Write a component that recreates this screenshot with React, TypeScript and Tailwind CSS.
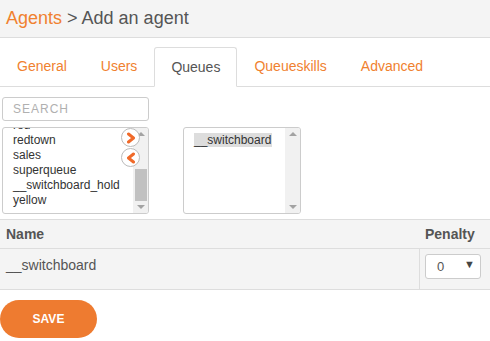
import { useState } from 'react';

const leftQueues = ['red', 'redtown', 'sales', 'superqueue', '__switchboard_hold', 'yellow'];

function ScrollBar({ thumb }: { thumb?: boolean }) {
  return (
    <div className="flex w-[15px] flex-col items-center bg-[#f1f1f1]">
      <div className="mt-[4px] h-0 w-0 border-x-[4px] border-b-[4px] border-x-transparent border-b-[#a3a3a3]" />
      <div className="flex flex-1 flex-col justify-end py-[4px]">
        {thumb && <div className="h-[32px] w-[12px] bg-[#c1c1c1]" />}
      </div>
      <div className="mb-[4px] h-0 w-0 border-x-[4px] border-t-[4px] border-x-transparent border-t-[#a3a3a3]" />
    </div>
  );
}

function CircleArrow({ dir }: { dir: 'right' | 'left' }) {
  return (
    <div className="flex h-[19px] w-[19px] items-center justify-center rounded-full border border-[#bbb] bg-white">
      <svg width="12" height="12" viewBox="0 0 12 12">
        {dir === 'right' ? (
          <path d="M3.5 2 L8.5 6 L3.5 10" fill="none" stroke="#f06a2a" strokeWidth="3" strokeLinecap="round" strokeLinejoin="round" />
        ) : (
          <path d="M8.5 2 L3.5 6 L8.5 10" fill="none" stroke="#f06a2a" strokeWidth="3" strokeLinecap="round" strokeLinejoin="round" />
        )}
      </svg>
    </div>
  );
}

export default function App() {
  const [tab] = useState('Queues');
  const tabs = ['General', 'Users', 'Queues', 'Queueskills', 'Advanced'];

  return (
    <div className="h-[341px] w-[490px] overflow-hidden bg-white font-['Liberation_Sans',Arial,sans-serif] text-[#555]">
      <div className="flex h-[38px] items-center border-b border-[#ddd] bg-[#f4f4f4] px-[6px] text-[18px]">
        <span className="text-[#f0812f]">Agents</span>
        <span className="ml-[5px] text-[#555]">&gt; Add an agent</span>
      </div>

      <div className="mt-[9px] flex h-[40px] border-b border-[#ddd] pl-0 text-[14px]">
        {tabs.map((t) => (
          <div
            key={t}
            className={
              t === tab
                ? 'relative -mb-px flex items-center rounded-t-[3px] border border-b-white border-[#ddd] bg-white px-[16px] text-[#555]'
                : 'flex items-center px-[17px] text-[#f0812f]'
            }
          >
            {t}
          </div>
        ))}
      </div>

      <div className="mt-[10px] px-[2px]">
        <div className="flex h-[24px] w-[147px] items-center rounded-[3px] border border-[#ccc] px-[10px] text-[12px] tracking-[1px] text-[#b0b0b0]">
          SEARCH
        </div>
        <div className="mt-[6px] flex gap-[34px]">
          <div className="relative flex h-[87px] w-[147px] overflow-hidden rounded-[3px] border border-[#ccc]">
            <div className="-mt-[10px] flex-1 pl-[10px] text-[12px] leading-[15px] text-[#333]">
              {leftQueues.map((q) => (
                <div key={q}>{q}</div>
              ))}
            </div>
            <ScrollBar thumb />
            <div className="absolute right-[8px] top-[0px] flex flex-col gap-[1px]">
              <CircleArrow dir="right" />
              <CircleArrow dir="left" />
            </div>
          </div>
          <div className="flex h-[87px] w-[118px] overflow-hidden rounded-[3px] border border-[#ccc]">
            <div className="flex-1 pl-[10px] pt-[5px] text-[12px] leading-[15px] text-[#333]">
              <span className="bg-[#ddd] pr-[1px]">__switchboard</span>
            </div>
            <ScrollBar />
          </div>
        </div>
      </div>

      <div className="mt-[5px] border-y border-[#ddd] bg-[#f4f4f4] text-[14px]">
        <div className="flex h-[29px] items-center border-b border-[#ddd] font-bold text-[#555]">
          <div className="flex-1 pl-[6px]">Name</div>
          <div className="w-[71px] pl-[6px]">Penalty</div>
        </div>
        <div className="flex h-[40px]">
          <div className="flex-1 pl-[6px] pt-[6px] text-[#555]">__switchboard</div>
          <div className="w-[71px] border-l border-[#ddd] pl-[5px] pt-[5px]">
            <div className="flex h-[25px] w-[56px] items-center justify-between rounded-[3px] border border-[#ccc] bg-white pl-[11px] pr-[5px] text-[13px] text-[#555]">
              <span>0</span>
              <span className="mb-[4px] text-[11px] text-[#444]">▼</span>
            </div>
          </div>
        </div>
      </div>

      <div className="mt-[10px] flex h-[38px] w-[97px] items-center justify-center rounded-full bg-[#ee7b30] text-[12px] font-bold text-white">
        SAVE
      </div>
    </div>
  );
}
